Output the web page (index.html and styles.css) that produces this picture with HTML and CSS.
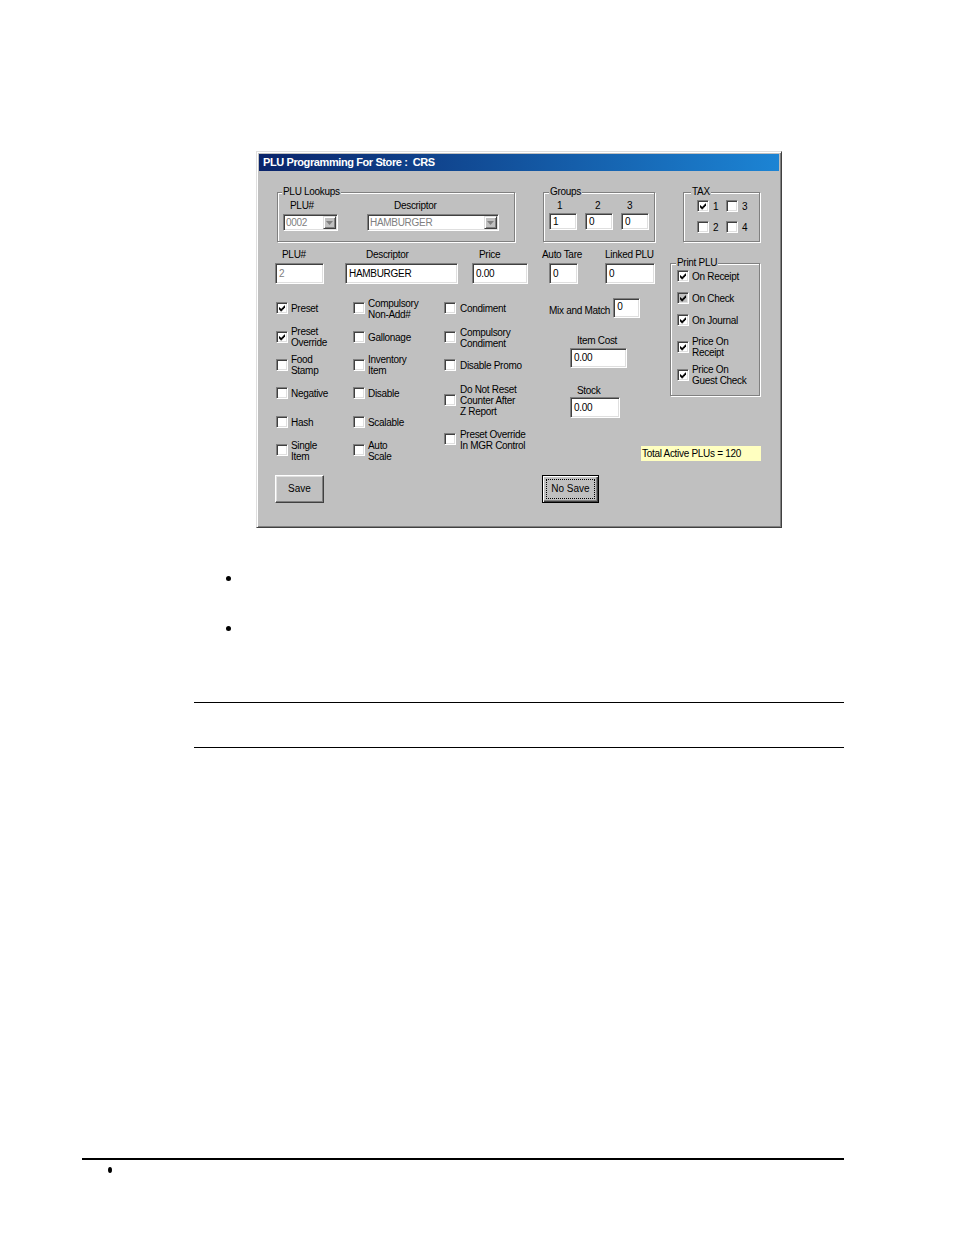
FILE: index.html
```html
<!DOCTYPE html>
<html>
<head>
<meta charset="utf-8">
<title>PLU Programming</title>
<link rel="stylesheet" href="styles.css">
</head>
<body>
<div class="page">
  <div class="dialog">
    <div class="titlebar">PLU Programming For Store :&nbsp; CRS</div>
    <div class="dlg-body">
      <div class="left">
        <div class="top-row">
          <fieldset class="grp grp-lookups">
            <legend>PLU Lookups</legend>
            <div class="lookup-cols">
              <div class="lk lk-plu">
                <div class="lbl">PLU#</div>
                <div class="combo combo-plu"><span class="combo-text">0002</span><span class="dd"><svg width="7" height="4" viewBox="0 0 7 4"><path d="M0 0h7L3.5 4z" fill="#808080"/></svg></span></div>
              </div>
              <div class="lk lk-desc">
                <div class="lbl">Descriptor</div>
                <div class="combo combo-desc"><span class="combo-text">HAMBURGER</span><span class="dd"><svg width="7" height="4" viewBox="0 0 7 4"><path d="M0 0h7L3.5 4z" fill="#808080"/></svg></span></div>
              </div>
            </div>
          </fieldset>
          <fieldset class="grp grp-groups">
            <legend>Groups</legend>
            <div class="groups-cols">
              <div class="gcol g1"><div class="lbl">1</div><div class="edit e-grp">1</div></div>
              <div class="gcol g2"><div class="lbl">2</div><div class="edit e-grp">0</div></div>
              <div class="gcol g3"><div class="lbl">3</div><div class="edit e-grp">0</div></div>
            </div>
          </fieldset>
        </div>

        <div class="fields-row">
          <div class="fcol f-plu"><div class="lbl">PLU#</div><div class="edit e-field disabled">2</div></div>
          <div class="fcol f-desc"><div class="lbl">Descriptor</div><div class="edit e-field">HAMBURGER</div></div>
          <div class="fcol f-price"><div class="lbl">Price</div><div class="edit e-field">0.00</div></div>
          <div class="fcol f-tare"><div class="lbl">Auto Tare</div><div class="edit e-field">0</div></div>
          <div class="fcol f-linked"><div class="lbl">Linked PLU</div><div class="edit e-field">0</div></div>
        </div>

        <div class="mid">
          <div class="ccol c1">
            <div class="chk"><span class="cb"><svg width="7" height="7" viewBox="0 0 7 7"><path d="M0 2h1v3H0zM1 3h1v3H1zM2 4h1v3H2zM3 3h1v3H3zM4 2h1v3H4zM5 1h1v3H5zM6 0h1v3H6z" fill="#000"/></svg></span><span class="ct">Preset</span></div>
            <div class="chk"><span class="cb"><svg width="7" height="7" viewBox="0 0 7 7"><path d="M0 2h1v3H0zM1 3h1v3H1zM2 4h1v3H2zM3 3h1v3H3zM4 2h1v3H4zM5 1h1v3H5zM6 0h1v3H6z" fill="#000"/></svg></span><span class="ct">Preset<br>Override</span></div>
            <div class="chk"><span class="cb"></span><span class="ct">Food<br>Stamp</span></div>
            <div class="chk"><span class="cb"></span><span class="ct">Negative</span></div>
            <div class="chk"><span class="cb"></span><span class="ct">Hash</span></div>
            <div class="chk"><span class="cb"></span><span class="ct">Single<br>Item</span></div>
          </div>
          <div class="ccol c2">
            <div class="chk"><span class="cb"></span><span class="ct">Compulsory<br>Non-Add#</span></div>
            <div class="chk"><span class="cb"></span><span class="ct">Gallonage</span></div>
            <div class="chk"><span class="cb"></span><span class="ct">Inventory<br>Item</span></div>
            <div class="chk"><span class="cb"></span><span class="ct">Disable</span></div>
            <div class="chk"><span class="cb"></span><span class="ct">Scalable</span></div>
            <div class="chk"><span class="cb"></span><span class="ct">Auto<br>Scale</span></div>
          </div>
          <div class="ccol c3">
            <div class="chk k1"><span class="cb"></span><span class="ct">Condiment</span></div>
            <div class="chk k2"><span class="cb"></span><span class="ct">Compulsory<br>Condiment</span></div>
            <div class="chk k3"><span class="cb"></span><span class="ct">Disable Promo</span></div>
            <div class="chk k4"><span class="cb"></span><span class="ct">Do Not Reset<br>Counter After<br>Z Report</span></div>
            <div class="chk k5"><span class="cb"></span><span class="ct">Preset Override<br>In MGR Control</span></div>
          </div>
          <div class="ccol c4">
            <div class="mix"><span class="mix-lbl">Mix and Match</span><div class="edit e-mix">0</div></div>
            <div class="lbl l-cost">Item Cost</div>
            <div class="edit e-cost">0.00</div>
            <div class="lbl l-stock">Stock</div>
            <div class="edit e-stock">0.00</div>
          </div>
        </div>

        <div class="buttons">
          <button class="btn btn-save">Save</button>
          <button class="btn btn-nosave"><span class="focus">No Save</span></button>
        </div>
      </div>

      <div class="right">
        <fieldset class="grp grp-tax">
          <legend>TAX</legend>
          <div class="tax-grid">
            <div class="chk tchk"><span class="cb"><svg width="7" height="7" viewBox="0 0 7 7"><path d="M0 2h1v3H0zM1 3h1v3H1zM2 4h1v3H2zM3 3h1v3H3zM4 2h1v3H4zM5 1h1v3H5zM6 0h1v3H6z" fill="#000"/></svg></span><span class="ct">1</span></div>
            <div class="chk tchk"><span class="cb"></span><span class="ct">3</span></div>
            <div class="chk tchk"><span class="cb"></span><span class="ct">2</span></div>
            <div class="chk tchk"><span class="cb"></span><span class="ct">4</span></div>
          </div>
        </fieldset>
        <fieldset class="grp grp-print">
          <legend>Print PLU</legend>
          <div class="print-list">
            <div class="chk p1"><span class="cb"><svg width="7" height="7" viewBox="0 0 7 7"><path d="M0 2h1v3H0zM1 3h1v3H1zM2 4h1v3H2zM3 3h1v3H3zM4 2h1v3H4zM5 1h1v3H5zM6 0h1v3H6z" fill="#000"/></svg></span><span class="ct">On Receipt</span></div>
            <div class="chk p2"><span class="cb cb-gray"><svg width="7" height="7" viewBox="0 0 7 7"><path d="M0 2h1v3H0zM1 3h1v3H1zM2 4h1v3H2zM3 3h1v3H3zM4 2h1v3H4zM5 1h1v3H5zM6 0h1v3H6z" fill="#000"/></svg></span><span class="ct">On Check</span></div>
            <div class="chk p3"><span class="cb"><svg width="7" height="7" viewBox="0 0 7 7"><path d="M0 2h1v3H0zM1 3h1v3H1zM2 4h1v3H2zM3 3h1v3H3zM4 2h1v3H4zM5 1h1v3H5zM6 0h1v3H6z" fill="#000"/></svg></span><span class="ct">On Journal</span></div>
            <div class="chk p4"><span class="cb"><svg width="7" height="7" viewBox="0 0 7 7"><path d="M0 2h1v3H0zM1 3h1v3H1zM2 4h1v3H2zM3 3h1v3H3zM4 2h1v3H4zM5 1h1v3H5zM6 0h1v3H6z" fill="#000"/></svg></span><span class="ct">Price On<br>Receipt</span></div>
            <div class="chk p5"><span class="cb"><svg width="7" height="7" viewBox="0 0 7 7"><path d="M0 2h1v3H0zM1 3h1v3H1zM2 4h1v3H2zM3 3h1v3H3zM4 2h1v3H4zM5 1h1v3H5zM6 0h1v3H6z" fill="#000"/></svg></span><span class="ct">Price On<br>Guest Check</span></div>
          </div>
        </fieldset>
        <div class="total">Total Active PLUs = 120</div>
      </div>
    </div>
  </div>

  <div class="bullets">
    <div class="dot dot1"></div>
    <div class="dot dot2"></div>
  </div>
  <div class="rule rule1"></div>
  <div class="rule rule2"></div>
  <div class="footer-rule"></div>
  <div class="footer-dot"></div>
</div>
</body>
</html>
```

FILE: styles.css
```css
html, body {
  margin: 0;
  padding: 0;
  background: #fff;
}
body {
  font-family: "Liberation Sans", Arial, sans-serif;
  color: #000;
}
.page {
  padding-top: 151px;
  padding-bottom: 40px;
}

/* ---------- dialog ---------- */
.dialog {
  margin-left: 256px;
  width: 526px;
  height: 377px;
  box-sizing: border-box;
  background: #c0c0c0;
  border: 1px solid;
  border-color: #dfdfdf #404040 #404040 #dfdfdf;
  box-shadow: inset 1px 1px #fff, inset -1px -1px #808080;
  padding: 2px;
  font-size: 10px;
  letter-spacing: -0.3px;
  line-height: 12px;
}
.titlebar {
  height: 17px;
  line-height: 17px;
  padding-left: 4px;
  background: linear-gradient(to right, #0a246a 0%, #1c84d4 100%);
  color: #fff;
  font-family: "Liberation Sans", Arial, sans-serif;
  font-weight: bold;
  font-size: 11px;
  letter-spacing: -0.4px;
  white-space: nowrap;
}
.dlg-body {
  display: flex;
  padding-left: 16px;
}
.left {
  width: 380px;
  display: flex;
  flex-direction: column;
}
.right {
  margin-left: 15px;
  width: 91px;
  display: flex;
  flex-direction: column;
}

/* ---------- group boxes ---------- */
fieldset.grp {
  margin: 0;
  padding: 0;
  min-width: 0;
  box-sizing: border-box;
  border: 1px solid #808080;
  box-shadow: inset 1px 1px #fff, 1px 1px #fff;
}
fieldset.grp legend {
  padding: 0 1px;
  height: 12px;
  line-height: 12px;
  background: #c0c0c0;
}
.lbl {
  line-height: 12px;
  height: 12px;
  white-space: nowrap;
}

.top-row {
  display: flex;
  margin-top: 15px;
  align-items: flex-start;
}
.grp-lookups {
  margin-left: 2px !important;
  width: 238px;
}
.grp-lookups legend { margin-left: 4px; }
.lookup-cols {
  display: flex;
  padding: 2px 0 10px 5px;
}
.lk-plu { width: 55px; }
.lk-desc { width: 132px; margin-left: 29px; }
.lk-plu .lbl { padding-left: 7px; }
.lk-desc .lbl { padding-left: 27px; }

.combo {
  margin-top: 2px;
  height: 17px;
  box-sizing: border-box;
  border: 1px solid;
  border-color: #808080 #fff #fff #808080;
  box-shadow: inset 1px 1px #404040, inset -1px -1px #dfdfdf;
  background: #fff;
  display: flex;
  align-items: center;
  color: #808080;
}
.combo-text {
  padding-left: 2px;
  line-height: 13px;
}
.dd {
  margin: 1px 1px 1px auto;
  width: 13px;
  height: 13px;
  box-sizing: border-box;
  background: #c0c0c0;
  border: 1px solid;
  border-color: #dfdfdf #404040 #404040 #dfdfdf;
  box-shadow: inset 1px 1px #fff, inset -1px -1px #808080;
  display: flex;
  align-items: center;
  justify-content: center;
}

.grp-groups {
  margin-left: 28px !important;
  width: 112px;
}
.grp-groups legend { margin-left: 5px; }
.groups-cols {
  display: flex;
  gap: 8px;
  padding: 2px 0 11px 5px;
}
.gcol { width: 28px; }
.g1 .lbl { padding-left: 8px; }
.g2 .lbl { padding-left: 10px; }
.g3 .lbl { padding-left: 6px; }

/* ---------- edits ---------- */
.edit {
  box-sizing: border-box;
  background: #fff;
  border: 1px solid;
  border-color: #808080 #fff #fff #808080;
  box-shadow: inset 1px 1px #404040, inset -1px -1px #dfdfdf;
  padding-left: 3px;
  display: flex;
  align-items: center;
  white-space: nowrap;
  overflow: hidden;
}
.edit.disabled { color: #808080; }
.e-grp {
  margin-top: 1px;
  height: 17px;
}

.fields-row {
  display: flex;
  margin-top: 6px;
}
.fcol {
  display: flex;
  flex-direction: column;
}
.fcol .lbl { margin-top: 1px; }
.e-field {
  margin-top: 2px;
  height: 21px;
}
.f-plu { width: 49px; }
.f-plu .lbl { padding-left: 7px; }
.f-desc { width: 113px; margin-left: 21px; }
.f-desc .lbl { padding-left: 21px; }
.f-price { width: 56px; margin-left: 14px; }
.f-price .lbl { padding-left: 7px; }
.f-tare { width: 42px; margin-left: 14px; }
.f-tare .edit { margin-left: 7px; width: 29px; }
.f-linked { width: 50px; margin-left: 21px; }

/* ---------- checkboxes ---------- */
.mid {
  display: flex;
  margin-top: 10px;
  height: 181px;
  align-items: flex-start;
}
.ccol {
  display: flex;
  flex-direction: column;
}
.chk {
  display: flex;
  align-items: center;
  white-space: nowrap;
}
.cb {
  flex: none;
  width: 12px;
  height: 12px;
  box-sizing: border-box;
  padding: 2px;
  background: #fff;
  border: 1px solid;
  border-color: #808080 #fff #fff #808080;
  box-shadow: inset 1px 1px #404040, inset -1px -1px #dfdfdf;
  display: flex;
}
.cb svg { display: block; }
.cb-gray { background: #c0c0c0; }
.ct {
  margin-left: 3px;
  line-height: 11px;
  padding-top: 1px;
}
.c1 { width: 77px; margin-left: 1px; }
.c2 { width: 91px; }
.c3 { width: 105px; }
.c1 .chk, .c2 .chk { height: 28.4px; }
.c3 .ct { margin-left: 4px; }
.c3 .k1 { height: 28px; }
.c3 .k2 { height: 30px; }
.c3 .k3 { height: 26px; }
.c3 .k4 { height: 44px; }
.c3 .k5 { height: 34px; }

.c4 { width: 100px; }
.mix {
  display: flex;
  align-items: center;
  margin-top: 4px;
  white-space: nowrap;
}
.mix-lbl { padding-top: 5px; }
.e-mix {
  margin-left: 3px;
  width: 27px;
  height: 20px;
  align-items: flex-start;
  padding-top: 2px;
}
.l-cost { margin-top: 17px; padding-left: 28px; }
.e-cost { margin-top: 1px; margin-left: 21px; width: 57px; height: 20px; }
.l-stock { margin-top: 17px; padding-left: 28px; }
.e-stock { margin-top: 0; margin-left: 21px; width: 50px; height: 21px; }

/* ---------- buttons ---------- */
.buttons {
  display: flex;
}
.btn {
  margin: 0;
  padding: 0;
  font: inherit;
  letter-spacing: 0;
  color: #000;
  box-sizing: border-box;
  height: 28px;
  background: #c0c0c0;
  border: 1px solid;
  border-color: #fff #404040 #404040 #fff;
  box-shadow: inset -1px -1px #808080, inset 1px 1px #dfdfdf;
  display: flex;
  align-items: center;
  justify-content: center;
  white-space: nowrap;
}
.btn-save { width: 49px; }
.btn-nosave {
  width: 57px;
  margin-left: 218px;
  border-color: #000;
  box-shadow: inset 1px 1px #fff, inset -1px -1px #404040, inset -2px -2px #808080;
}
.focus {
  border: 1px dotted #000;
  width: 49px;
  height: 20px;
  box-sizing: border-box;
  display: flex;
  align-items: center;
  justify-content: center;
}

/* ---------- right column ---------- */
.grp-tax {
  margin-top: 15px !important;
  margin-left: 13px !important;
  width: 77px;
}
.grp-tax legend { margin-left: 7px; }
.tax-grid {
  display: grid;
  grid-template-columns: 29px 29px;
  row-gap: 9px;
  padding: 2px 0 8px 13px;
}
.tchk .ct { margin-left: 4px; }

.grp-print {
  margin-top: 15px !important;
  width: 90px;
}
.grp-print legend { margin-left: 5px; }
.print-list {
  display: flex;
  flex-direction: column;
  padding: 1px 0 9px 6px;
}
.print-list .ct { padding-top: 0; }
.print-list .p2 { margin-top: 10px; }
.print-list .p3 { margin-top: 10px; }
.print-list .p4 { margin-top: 10px; }
.print-list .p5 { margin-top: 6px; }

.total {
  margin-top: 50px;
  margin-left: -29px;
  width: 120px;
  height: 15px;
  line-height: 15px;
  background: #ffffc0;
  padding-left: 1px;
  box-sizing: border-box;
  white-space: nowrap;
}

/* ---------- page decoration ---------- */
.bullets {
  margin-top: 47.5px;
}
.dot {
  width: 5px;
  height: 5px;
  border-radius: 50%;
  background: #000;
  margin-left: 225.5px;
}
.dot2 { margin-top: 45px; }
.rule {
  height: 1px;
  background: #000;
  margin-left: 194px;
  width: 650px;
}
.rule1 { margin-top: 71px; }
.rule2 { margin-top: 44px; }
.footer-rule {
  margin-top: 410px;
  margin-left: 82px;
  width: 762px;
  height: 2px;
  background: #000;
}
.footer-dot {
  margin-top: 7px;
  margin-left: 108px;
  width: 4px;
  height: 6px;
  border-radius: 50%;
  background: #000;
}
```
